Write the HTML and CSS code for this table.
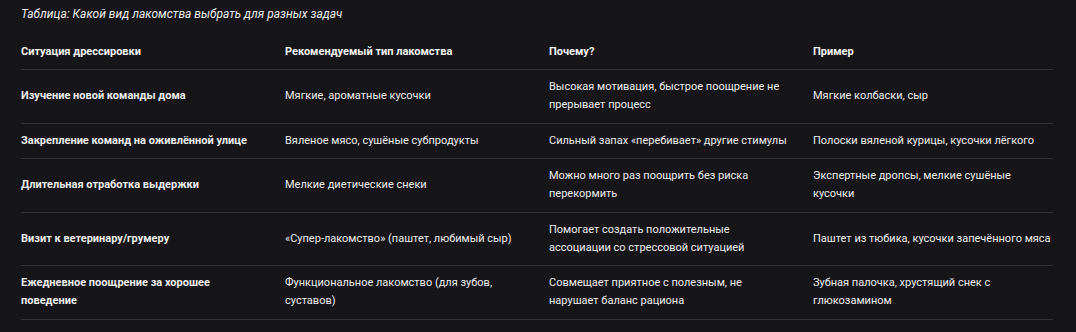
FILE: index.html
```html
<!DOCTYPE html>
<html lang="ru">
<head>
<meta charset="utf-8">
<link rel="stylesheet" href="styles.css">
</head>
<body>
<div class="wrap">
  <table class="treats">
    <caption>Таблица: Какой вид лакомства выбрать для разных задач</caption>
    <colgroup>
      <col class="c1"><col class="c2"><col class="c3"><col class="c4">
    </colgroup>
    <thead>
      <tr>
        <th>Ситуация дрессировки</th>
        <th>Рекомендуемый тип лакомства</th>
        <th>Почему?</th>
        <th>Пример</th>
      </tr>
    </thead>
    <tbody>
      <tr>
        <td class="sit">Изучение новой команды дома</td>
        <td>Мягкие, ароматные кусочки</td>
        <td>Высокая мотивация, быстрое поощрение не прерывает процесс</td>
        <td>Мягкие колбаски, сыр</td>
      </tr>
      <tr>
        <td class="sit">Закрепление команд на оживлённой улице</td>
        <td>Вяленое мясо, сушёные субпродукты</td>
        <td>Сильный запах «перебивает» другие стимулы</td>
        <td>Полоски вяленой курицы, кусочки лёгкого</td>
      </tr>
      <tr>
        <td class="sit">Длительная отработка выдержки</td>
        <td>Мелкие диетические снеки</td>
        <td>Можно много раз поощрить без риска перекормить</td>
        <td>Экспертные дропсы, мелкие сушёные кусочки</td>
      </tr>
      <tr>
        <td class="sit">Визит к ветеринару/грумеру</td>
        <td>«Супер-лакомство» (паштет, любимый сыр)</td>
        <td>Помогает создать положительные ассоциации со стрессовой ситуацией</td>
        <td>Паштет из тюбика, кусочки запечённого мяса</td>
      </tr>
      <tr>
        <td class="sit">Ежедневное поощрение за хорошее поведение</td>
        <td>Функциональное лакомство (для зубов, суставов)</td>
        <td>Совмещает приятное с полезным, не нарушает баланс рациона</td>
        <td>Зубная палочка, хрустящий снек с глюкозамином</td>
      </tr>
    </tbody>
  </table>
</div>
</body>
</html>
```
FILE: styles.css
```css
html, body {
  margin: 0;
  padding: 0;
  background: #161618;
}
body {
  font-family: Roboto, "Noto Sans", sans-serif;
  font-size: 11px;
  color: #ececec;
}
.wrap {
  padding: 5px 21px 0 21px;
}
.treats {
  border-collapse: collapse;
  width: 1032px;
  table-layout: fixed;
}
.treats caption {
  text-align: left;
  font-style: italic;
  font-size: 12px;
  line-height: 18px;
  padding-bottom: 12px;
}
.c1, .c2, .c3 { width: 264px; }
.c4 { width: 240px; }
.treats th,
.treats td {
  text-align: left;
  vertical-align: middle;
  padding: 8px 23px 8px 0;
  line-height: 18px;
  border-bottom: 1px solid #333335;
}
.treats td {
  padding-bottom: 8.5px;
}
.treats th {
  font-weight: 700;
  color: #f2f2f2;
}
.treats td.sit {
  font-weight: 700;
}
.treats td:last-child,
.treats th:last-child {
  padding-right: 0;
}
```
